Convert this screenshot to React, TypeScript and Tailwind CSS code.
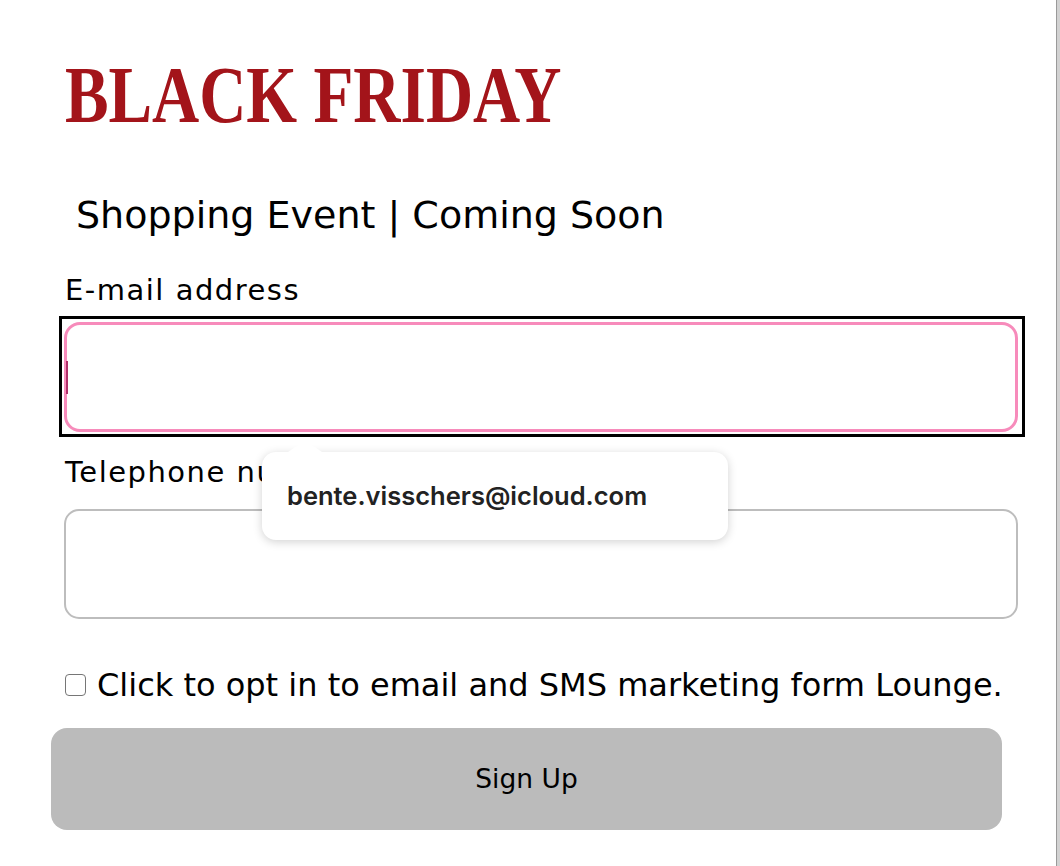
import { useState } from 'react';

const sans = { fontFamily: '"DejaVu Sans", "Noto Sans", sans-serif' };

export default function App() {
  const [email, setEmail] = useState('');
  const [phone, setPhone] = useState('');
  const [optIn, setOptIn] = useState(false);

  return (
    <div className="flex h-[866px] w-[1060px] overflow-hidden bg-white">
      <main className="relative w-[1056px] shrink-0 pt-[52px]" style={sans}>
        <h1
          className="ml-[65px] inline-block origin-left scale-x-[0.816] whitespace-nowrap text-[80px] font-bold leading-[86px] text-[#a3141a]"
          style={{ fontFamily: '"Liberation Serif", "Times New Roman", serif' }}
        >
          BLACK FRIDAY
        </h1>

        <p className="ml-[76px] mt-[53px] text-[38px] leading-[48px] text-black">
          Shopping Event | Coming Soon
        </p>

        <form className="mt-[33px] flex flex-col" onSubmit={(e) => e.preventDefault()}>
          <label className="ml-[65px] text-[29px] leading-[36px] tracking-[1.5px] text-black">E-mail address</label>
          <div className="ml-[59px] mt-[8px] w-[966px] border-[3px] border-black pb-[2px] pl-[2px] pr-[4px] pt-[3px]">
            <div className="relative">
              <input
                value={email}
                onChange={(e) => setEmail(e.target.value)}
                className="block h-[110px] w-full rounded-[16px] border-[3px] border-[#f78bbb] px-3 outline-none"
              />
              <span className="absolute left-[2px] top-[39px] h-[33px] w-[2px] bg-[#b0306a]" />
            </div>
          </div>

          <label className="ml-[65px] mt-[17px] text-[29px] leading-[36px] tracking-[1.5px] text-black">Telephone number</label>
          <input
            value={phone}
            onChange={(e) => setPhone(e.target.value)}
            className="ml-[64px] mt-[19px] block h-[110px] w-[954px] rounded-[15px] border-2 border-[#bdbdbd] px-3 outline-none"
          />

          <label className="ml-[65px] mt-[46px] flex items-center gap-[11px] text-[32px] leading-[40px] text-black">
            <input
              type="checkbox"
              checked={optIn}
              onChange={(e) => setOptIn(e.target.checked)}
              className="h-[22px] w-[21px] shrink-0 appearance-none rounded-[4px] border-[1.5px] border-[#767676] bg-white"
            />
            <span className="whitespace-nowrap">Click to opt in to email and SMS marketing form Lounge.</span>
          </label>

          <button
            type="submit"
            className="ml-[51px] mt-[23px] h-[102px] w-[951px] rounded-[16px] bg-[#bbbbbb] text-[26.5px] text-black"
          >
            Sign Up
          </button>
        </form>

        {/* autofill suggestion */}
        <div className="absolute left-[262px] top-[452px] w-[466px] rounded-[14px] bg-white px-[25px] py-[28px] shadow-[0_2px_10px_rgba(0,0,0,0.18)]">
          <div className="absolute -top-[12px] left-[26px] h-0 w-0 border-x-[17px] border-b-[12px] border-x-transparent border-b-white" />
          <span
            className="text-[25.5px] font-semibold leading-[32px] text-[#222]"
            style={{ fontFamily: 'Inter, "Noto Sans", sans-serif' }}
          >
            bente.visschers@icloud.com
          </span>
        </div>
      </main>
      <aside className="flex-1 border-l border-[#9a9a9a] bg-[#d2d2d2]" />
    </div>
  );
}
